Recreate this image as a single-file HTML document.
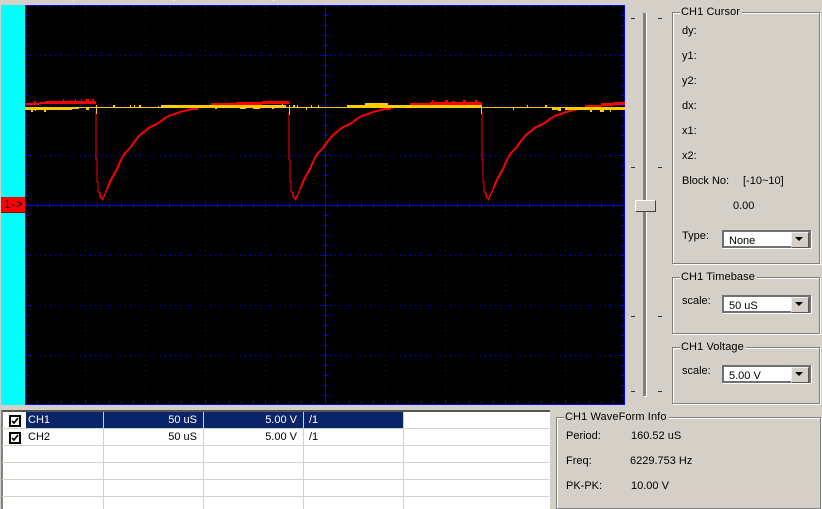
<!DOCTYPE html>
<html><head><meta charset="utf-8"><style>
html,body{margin:0;padding:0}
body{width:822px;height:509px;position:relative;overflow:hidden;background:#d4d0c8;font:11px/12px "Liberation Sans",sans-serif;color:#000}
div,span{position:absolute;box-sizing:border-box}
span{white-space:pre}
.g{border:1px solid #808080;box-shadow:inset 1px 1px #fff,1px 1px #fff}
.l{background:#d4d0c8;padding:0 2px 0 1px;letter-spacing:.1px}
.c{background:#fff;border:2px solid #707070;width:89px;height:18px;left:722px;box-shadow:1px 1px #fff}
.c i{position:absolute;left:5px;top:3px;font-style:normal}
.c b{position:absolute;right:0;top:0;width:16px;height:14px;background:#d4d0c8;border:1px solid;border-color:#eee #555 #555 #eee}
.c b:after{content:"";position:absolute;left:3px;top:4px;border:4px solid transparent;border-top:4px solid #000;border-bottom:0}
.k{width:12px;height:12px;left:9px;border:2px solid #000;background:#fff}
.r{height:1px;left:2px;width:547px;background:#d4d0c8}
.v{width:1px;top:412px;height:97px;background:#d4d0c8}
.s{width:4px;height:1px;background:#333}
</style></head><body>
<svg width="822" height="509" style="position:absolute;left:0;top:0" shape-rendering="crispEdges">
<rect x="1" y="5" width="24" height="400" fill="#0ff"/>
<rect x="25" y="5" width="600" height="400" fill="#000"/>
<g stroke="#0000ff" stroke-dasharray="1 4" fill="none">
<path d="M25 55.5H625M25 105.5H625M25 155.5H625M25 255.5H625M25 305.5H625M25 355.5H625"/>
<path d="M85.5 5V405M145.5 5V405M205.5 5V405M265.5 5V405M385.5 5V405M445.5 5V405M505.5 5V405M565.5 5V405"/>
</g>
<g stroke="#0000ff" fill="none">
<path d="M25 205.5H625M325.5 5V405M25 5.5H625M25.5 5V405M624.5 5V405M25 404.5H625"/>
<line x1="37" y1="205.5" x2="625" y2="205.5" stroke-width="5" stroke-dasharray="1 11"/>
<line x1="37" y1="6.5" x2="625" y2="6.5" stroke-width="3" stroke-dasharray="1 11"/>
<line x1="37" y1="402.5" x2="625" y2="402.5" stroke-width="3" stroke-dasharray="1 11"/>
<line x1="27" y1="15" x2="27" y2="405" stroke-width="3" stroke-dasharray="1 9"/>
<line x1="622.5" y1="15" x2="622.5" y2="405" stroke-width="3" stroke-dasharray="1 9"/>
<line x1="325.5" y1="15" x2="325.5" y2="405" stroke-width="5" stroke-dasharray="1 9"/>
</g>
<defs><g id="p"><path fill="none" stroke="#f00" stroke-width="1.4" d="M96 112V160H97V182H98V192H99.5L100.500 197L102.500 199.500L105 194L107.500 188"/><path fill="none" stroke="#f00" stroke-width="2" d="M107.500 188L110 182L113 176L116.500 170L120 162L123 156L126 152L130 148L135 141L140 135L145 131L150 127L155 125L160 122L165 118L170 115.500L175 114L180 112L186 110.500L192 109H198"/></g></defs>
<use href="#p"/><use href="#p" x="193"/><use href="#p" x="386"/>
<g fill="#f00">
<rect x="25" y="103" width="14" height="2"/><rect x="39" y="102" width="6" height="2"/><rect x="45" y="101" width="51" height="3"/>
<rect x="63" y="99" width="1" height="2"/><rect x="70" y="100" width="1" height="1"/><rect x="75" y="99" width="1" height="2"/><rect x="81" y="99" width="1" height="2"/><rect x="86" y="99" width="3" height="2"/><rect x="92" y="99" width="2" height="2"/><rect x="34" y="101" width="2" height="2"/>
<rect x="211" y="103" width="25" height="2"/><rect x="236" y="102" width="26" height="3"/><rect x="262" y="101" width="27" height="3"/>
<rect x="410" y="103" width="20" height="3"/><rect x="430" y="102" width="52" height="3"/><rect x="432" y="100" width="1" height="2"/><rect x="445" y="100" width="3" height="2"/><rect x="452" y="101" width="3" height="1"/><rect x="463" y="100" width="3" height="2"/><rect x="475" y="100" width="2" height="2"/>
<rect x="585" y="105" width="16" height="2"/><rect x="601" y="103" width="12" height="3"/><rect x="613" y="102" width="12" height="3"/>
</g>
<g fill="#ffcc00">
<rect x="25" y="107" width="600" height="1"/>
<rect x="25" y="107" width="47" height="3"/><rect x="31" y="110" width="2" height="2"/><rect x="35" y="110" width="1" height="1"/><rect x="44" y="110" width="2" height="2"/><rect x="72" y="107" width="7" height="2"/><rect x="86" y="108" width="3" height="2"/>
<rect x="96" y="105" width="1" height="9"/><rect x="113" y="105" width="2" height="2"/><rect x="130" y="105" width="1" height="2"/><rect x="134" y="105" width="1" height="2"/><rect x="139" y="105" width="2" height="2"/>
<rect x="158" y="106" width="1" height="1"/><rect x="161" y="105" width="50" height="3"/><rect x="211" y="105" width="75" height="3"/><rect x="215" y="107" width="2" height="2"/><rect x="240" y="107" width="6" height="2"/><rect x="253" y="107" width="7" height="2"/><rect x="272" y="107" width="2" height="2"/><rect x="282" y="104" width="1" height="3"/>
<rect x="289" y="105" width="1" height="10"/><rect x="293" y="105" width="2" height="2"/><rect x="297" y="105" width="1" height="2"/><rect x="306" y="108" width="1" height="2"/><rect x="311" y="105" width="1" height="2"/><rect x="318" y="105" width="1" height="2"/>
<rect x="347" y="105" width="10" height="2"/><rect x="357" y="105" width="8" height="3"/><rect x="365" y="103" width="23" height="4"/><rect x="388" y="105" width="93" height="3"/>
<rect x="481" y="105" width="1" height="9"/><rect x="527" y="105" width="1" height="2"/><rect x="513" y="108" width="1" height="2"/><rect x="545" y="105" width="2" height="2"/><rect x="552" y="108" width="6" height="2"/><rect x="558" y="108" width="3" height="3"/>
<rect x="565" y="107" width="60" height="3"/><rect x="590" y="110" width="2" height="2"/><rect x="600" y="110" width="4" height="2"/><rect x="610" y="110" width="1" height="2"/>
</g>
<g fill="#fff"><rect x="73" y="0" width="1" height="1"/><rect x="173" y="0" width="1" height="1"/><rect x="273" y="0" width="1" height="1"/></g>
<rect x="1" y="197" width="24" height="16" fill="#f00"/><rect x="1" y="212" width="24" height="1" fill="#800"/>
</svg>
<span style="left:4px;top:198px;font-size:12px;letter-spacing:.5px">1-&gt;</span>

<div style="left:643px;top:13px;width:4px;height:384px;background:#808080;border-left:1px solid #808080;border-right:1px solid #fff;border-bottom:1px solid #fff"></div>
<div style="left:635px;top:200px;width:21px;height:12px;background:#d4d0c8;border:1px solid;border-color:#fff #404040 #404040 #fff"></div>
<div class="s" style="left:631px;top:18px"></div><div class="s" style="left:658px;top:18px"></div>
<div class="s" style="left:631px;top:167px"></div><div class="s" style="left:658px;top:167px"></div>
<div class="s" style="left:631px;top:316px"></div><div class="s" style="left:658px;top:316px"></div>
<div class="s" style="left:631px;top:391px"></div><div class="s" style="left:658px;top:391px"></div>

<div class="g" style="left:672px;top:12px;width:148px;height:252px"></div>
<span class="l" style="left:680px;top:6px">CH1 Cursor</span>
<span style="left:682px;top:25px">dy:</span>
<span style="left:682px;top:50px">y1:</span>
<span style="left:682px;top:75px">y2:</span>
<span style="left:682px;top:100px">dx:</span>
<span style="left:682px;top:125px">x1:</span>
<span style="left:682px;top:150px">x2:</span>
<span style="left:682px;top:175px">Block No:</span>
<span style="left:743px;top:175px">[-10~10]</span>
<span style="left:733px;top:200px">0.00</span>
<span style="left:682px;top:230px">Type:</span>
<div class="c" style="top:230px"><i>None</i><b></b></div>

<div class="g" style="left:672px;top:277px;width:148px;height:57px"></div>
<span class="l" style="left:680px;top:271px">CH1 Timebase</span>
<span style="left:682px;top:295px">scale:</span>
<div class="c" style="top:295px"><i>50 uS</i><b></b></div>

<div class="g" style="left:672px;top:347px;width:148px;height:57px"></div>
<span class="l" style="left:680px;top:341px">CH1 Voltage</span>
<span style="left:682px;top:365px">scale:</span>
<div class="c" style="top:365px"><i>5.00 V</i><b></b></div>

<div class="g" style="left:556px;top:417px;width:265px;height:92px"></div>
<span class="l" style="left:564px;top:411px">CH1 WaveForm Info</span>
<span style="left:566px;top:430px">Period:</span><span style="left:631px;top:430px">160.52 uS</span>
<span style="left:566px;top:455px">Freq:</span><span style="left:630px;top:455px">6229.753 Hz</span>
<span style="left:566px;top:480px">PK-PK:</span><span style="left:631px;top:480px">10.00 V</span>

<div style="left:1px;top:410px;width:549px;height:99px;background:#fff;border-top:2px solid #555;border-left:2px solid #808080"></div>
<div style="left:26px;top:412px;width:377px;height:16px;background:#0a246a"></div>
<div class="r" style="top:428px"></div><div class="r" style="top:445px"></div><div class="r" style="top:462px"></div><div class="r" style="top:479px"></div><div class="r" style="top:496px"></div>
<div class="v" style="left:103px"></div><div class="v" style="left:203px"></div><div class="v" style="left:303px"></div><div class="v" style="left:403px"></div>
<div class="k" style="top:415px"><svg width="8" height="8" style="position:absolute;left:0;top:0"><path d="M1 4L3 6L7 1" fill="none" stroke="#000" stroke-width="1.6"/></svg></div>
<div class="k" style="top:432px"><svg width="8" height="8" style="position:absolute;left:0;top:0"><path d="M1 4L3 6L7 1" fill="none" stroke="#000" stroke-width="1.6"/></svg></div>
<span style="left:28px;top:414px;color:#fff">CH1</span>
<span style="right:625px;top:414px;color:#fff">50 uS</span>
<span style="right:525px;top:414px;color:#fff">5.00 V</span>
<span style="left:309px;top:414px;color:#fff">/1</span>
<span style="left:28px;top:431px">CH2</span>
<span style="right:625px;top:431px">50 uS</span>
<span style="right:525px;top:431px">5.00 V</span>
<span style="left:309px;top:431px">/1</span>
</body></html>
